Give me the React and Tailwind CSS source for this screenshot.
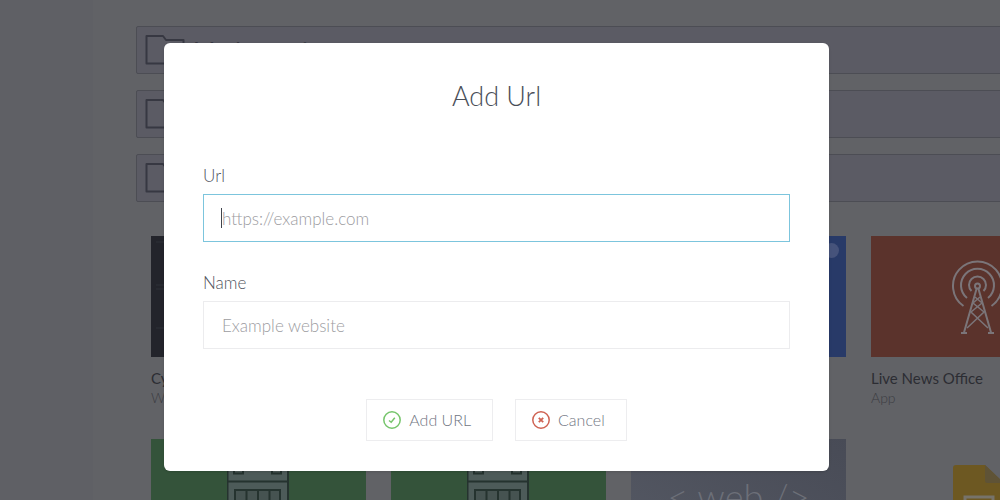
import React, { useState } from 'react';

const folders = [
  { id: 1, name: "Mathematics" },
  { id: 2, name: "" },
  { id: 3, name: "" }
];

function FolderIcon() {
  return (
    <svg className="w-10 h-8 shrink-0" viewBox="0 0 40 32" fill="none" stroke="#373842" strokeWidth="2" strokeLinejoin="round">
      <path d="M1.500 2H18L21 6H38.500V29.500H1.500Z" />
    </svg>
  );
}

function HouseArt() {
  return (
    <svg className="w-16 h-[120px]" viewBox="0 0 64 120" fill="none" stroke="#25332f" strokeWidth="2">
      <path d="M0.500 15H61V119H0.500Z" fill="#4d5b59" />
      <path d="M7 22H16V34.500H7ZM45 22H54V34.500H45ZM0.500 42.500H61" />
      <path d="M8 51H53V72H8ZM19.500 51V72M31 51V72M42.500 51V72" fill="#465351" />
    </svg>
  );
}

function MastArt() {
  return (
    <svg className="w-16 h-[120px]" viewBox="2 0 64 120" fill="none" stroke="#7b7579" strokeWidth="2">
      <path d="M18.500 70A24.500 24.500 0 1 1 46.500 70" />
      <path d="M22 62A16.500 16.500 0 1 1 43 62" />
      <path d="M26.500 55A8.500 8.500 0 1 1 38.500 55" />
      <circle cx="32.500" cy="50" r="2.500" />
      <path d="M31.500 53L19 96.500M33.500 53L46 96.500M16 97H22M43 97H49" />
      <path d="M30 61L37 67L26 76L43 92M35 61L28 67L39 76L22 92" strokeWidth="1.500" />
    </svg>
  );
}

function DocArt() {
  return (
    <svg className="w-[52px] h-[68px] mt-[26px]" viewBox="0 0 52 68">
      <path d="M3 0H32L51 18V65Q51 68 48 68H3Q0 68 0 65V3Q0 0 3 0Z" fill="#6d5822" />
      <path d="M32 0L51 18H34Q32 18 32 16Z" fill="#5f5336" />
      <path d="M12 32H40V54H12Z" fill="none" stroke="#77736a" strokeWidth="3" />
    </svg>
  );
}

function Tile({ title, kind, className, children }) {
  return (
    <a href="#" className="block">
      <div className={`h-[121px] flex justify-center overflow-hidden ${className}`}>{children}</div>
      <h3 className="mt-[11px] text-[15px] leading-5 text-[#2c2d33] whitespace-nowrap">{title}</h3>
      <p className="text-sm leading-5 font-light text-[#3b3c42]">{kind}</p>
    </a>
  );
}

function Library() {
  return (
    <div className="flex h-full">
      <aside className="w-[93px] shrink-0 bg-[#5f6065]"></aside>

      <main className="flex-1 min-w-0 pl-[43px] pt-[26px]">
        {/* Folders */}
        <div className="space-y-4 -mr-4">
          {folders.map(folder => (
            <a
              key={folder.id}
              href="#"
              className="flex items-center gap-2 h-12 px-2 rounded-xs border border-[#4c4d54] bg-[#5b5b64] text-2xl text-[#373842]"
            >
              <FolderIcon />
              {folder.name && <span>{folder.name}</span>}
            </a>
          ))}
        </div>

        {/* Apps */}
        <div className="mt-[34px] ml-[15px] grid grid-cols-[repeat(4,215px)] gap-x-[25px] gap-y-[31px]">
          <Tile title="Cyber" kind="Website" className="bg-[#23242b]">
            <svg className="w-full h-full" viewBox="0 0 215 121" fill="none" stroke="#2f3038">
              <path d="M5 6H210M5 49H210M5 53H210M5 92H210" />
            </svg>
          </Tile>
          <Tile className="bg-[#34533a]" />
          <Tile className="bg-[#283a68]">
            <span className="ml-auto mr-[7px] mt-[7px] w-[15px] h-[15px] rounded-full bg-[#46537b]"></span>
          </Tile>
          <Tile title="Live News Office" kind="App" className="bg-[#5b332c]">
            <MastArt />
          </Tile>
          <Tile className="bg-[#34533a]">
            <HouseArt />
          </Tile>
          <Tile className="bg-[#34533a]">
            <HouseArt />
          </Tile>
          <Tile className="items-center bg-linear-to-tr from-[#555964] to-[#484b56]">
            <span className="pb-2 text-4xl font-light text-[#6c6f78]">&lt; web /&gt;</span>
          </Tile>
          <Tile>
            <DocArt />
          </Tile>
        </div>
      </main>
    </div>
  );
}

function Field({ id, label, value, onChange, placeholder, focused }) {
  return (
    <div>
      <label htmlFor={id} className="block text-[17px] leading-6 font-light text-[#4f535d]">{label}</label>
      <div className="relative mt-1.5">
        <input
          id={id}
          type="text"
          value={value}
          onChange={onChange}
          placeholder={placeholder}
          className={`block w-full h-12 px-[18px] border text-[17px] font-light text-[#3f434c] placeholder:text-[#9c9c9f] outline-none ${
            focused ? 'border-[#7cc5dd] caret-transparent' : 'border-[#ececee]'
          }`}
        />
        {focused && !value && <span className="absolute left-[18px] top-3.5 w-px h-5 bg-[#3f434c]"></span>}
      </div>
    </div>
  );
}

function AddUrlDialog() {
  const [url, setUrl] = useState('');
  const [name, setName] = useState('');

  return (
    <form
      role="dialog"
      aria-labelledby="dialog-title"
      onSubmit={(e) => e.preventDefault()}
      className="w-full max-w-[665px] bg-white rounded-md px-[39px] pt-[35px] pb-[30px] shadow-sm"
    >
      <h2 id="dialog-title" className="text-center text-[27px] leading-9 font-light text-[#4a4e58]">Add Url</h2>

      <div className="mt-[50px] space-y-[29px]">
        <Field id="url" label="Url" value={url} onChange={(e) => setUrl(e.target.value)} placeholder="https://example.com" focused />
        <Field id="name" label="Name" value={name} onChange={(e) => setName(e.target.value)} placeholder="Example website" />
      </div>

      <div className="mt-[50px] flex justify-center gap-[22px]">
        <button type="submit" className="flex items-center gap-2 h-[42px] pl-4 pr-[21px] border border-[#ededef] font-light text-[#717682]">
          <svg className="w-[18px] h-[18px]" viewBox="0 0 18 18" fill="none" stroke="#76c56c" strokeWidth="1.500">
            <circle cx="9" cy="9" r="8.200" />
            <path d="M6 9.500L8.200 11.300L11.800 6.800" />
          </svg>
          <span>Add URL</span>
        </button>
        <button type="button" className="flex items-center gap-2 h-[42px] pl-4 pr-[21px] border border-[#ededef] font-light text-[#717682]">
          <svg className="w-[18px] h-[18px]" viewBox="0 0 18 18" fill="none" stroke="#cf6353" strokeWidth="1.500">
            <circle cx="9" cy="9" r="8.200" />
            <path d="M6.800 6.800L11.200 11.200M11.200 6.800L6.800 11.200" strokeWidth="1.800" />
          </svg>
          <span>Cancel</span>
        </button>
      </div>
    </form>
  );
}

function App() {
  return (
    <div className="relative h-screen overflow-hidden bg-[#616266] font-['Lato',sans-serif]">
      <Library />

      {/* Dialog layer */}
      <div className="absolute inset-0 flex justify-center items-start pt-[43px] pr-[7px]">
        <AddUrlDialog />
      </div>
    </div>
  );
}

export default App;
